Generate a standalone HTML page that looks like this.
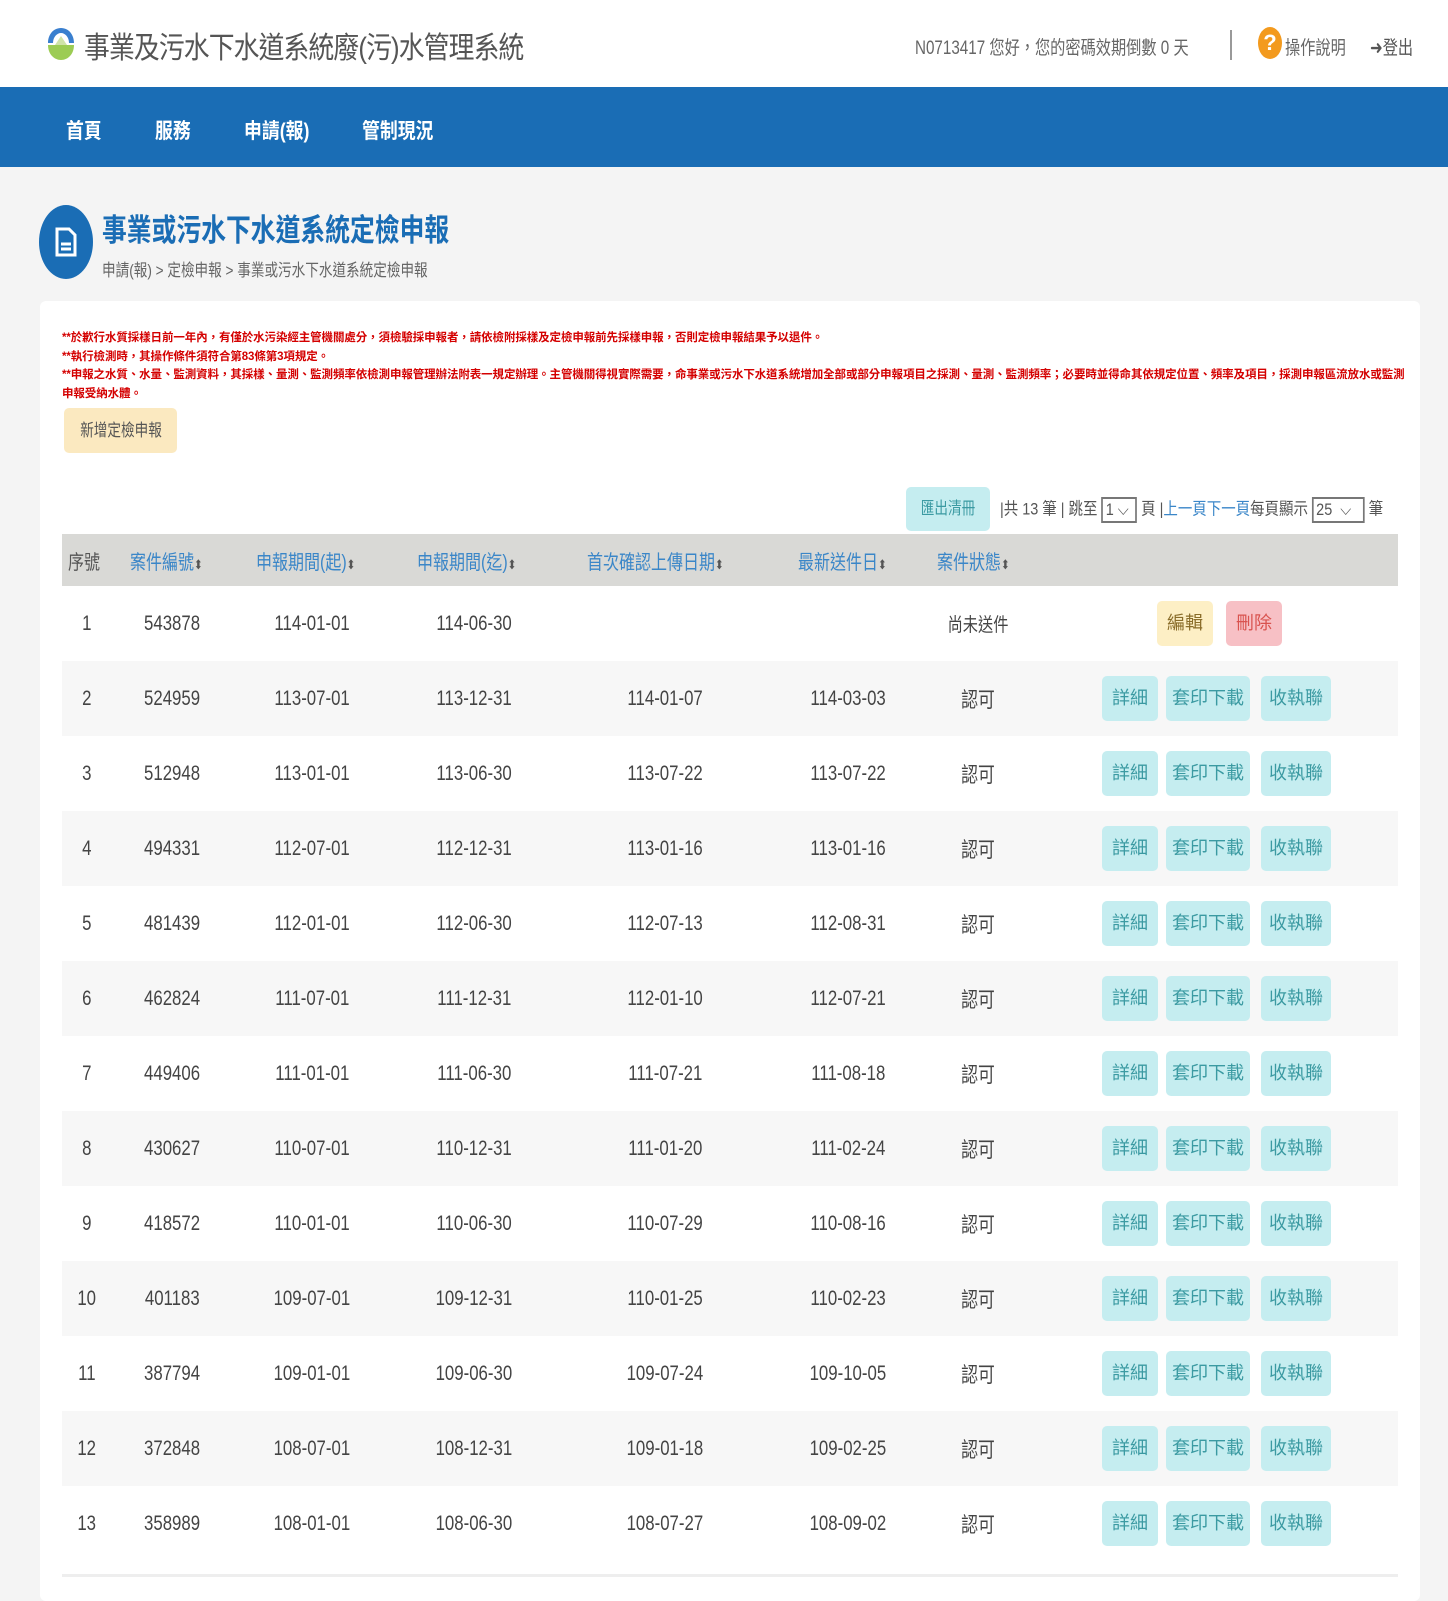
<!DOCTYPE html>
<html><head><meta charset="utf-8">
<style>
*{margin:0;padding:0;box-sizing:border-box}
body{width:1448px;height:1586px;background:#f4f4f4;font-family:"Liberation Sans","Noto Sans CJK TC",sans-serif;color:#444;position:relative;overflow:hidden}
.a{position:absolute;white-space:nowrap}
.c{display:inline-block;transform:scaleX(.8);transform-origin:center}
#hdr{position:absolute;left:0;top:0;width:1448px;height:87px;background:#fff}
#nav{position:absolute;left:0;top:87px;width:1448px;height:80px;background:#1a6db5}
#nav span{position:absolute;top:28px;color:#fff;font-size:21px;font-weight:bold;display:inline-block;transform:scaleX(.85);transform-origin:left}
#card{position:absolute;left:40px;top:301px;width:1380px;height:1300px;background:#fff;border-radius:6px}
.red{color:#d40000;font-size:11.5px;left:62px;font-weight:bold;letter-spacing:-0.1px}
table{position:absolute;left:62px;top:534px;width:1336px;border-collapse:collapse;table-layout:fixed}
th{height:52px;background:#d9d9d6;color:#3a86c8;font-weight:normal;font-size:20px;text-align:left;white-space:nowrap}
td{height:75px;text-align:center;font-size:21px;color:#444;white-space:nowrap}
tr:nth-child(odd) td{background:#f7f7f7}
tr:nth-child(even) td{background:#fff}
td.act{text-align:left;padding-left:68px}
.b{display:inline-block;height:45px;line-height:45px;border-radius:5px;background:#c5edf0;color:#3b9aa2;font-size:18px;text-align:center;vertical-align:middle;margin-right:8px}
.b1{width:56px}.b2{width:84px;margin-right:11px}.b3{width:70px}
.ar{font-size:13px;color:#555}
</style></head><body>
<div id="hdr">
<svg class="a" style="left:47px;top:26px" width="28" height="36" viewBox="0 0 28 36"><path d="M14 2C6 2 1 9 1 17h5c0-6 4-10 8-10s8 4 8 10h5C27 9 22 2 14 2z" fill="#3a7fcf"/><path d="M1 19h26c0 9-6 15-13 15S1 28 1 19z" fill="#9ccc54"/><path d="M8 19l6-9 6 9z" fill="#cfe3a8"/></svg>
<div class="a" style="left:84px;top:23px;font-size:30px;color:#555;letter-spacing:-1px"><span style="display:inline-block;transform:scaleX(.86);transform-origin:left">事業及污水下水道系統廢(污)水管理系統</span></div>
<div class="a" style="left:915px;top:33px;font-size:19px;color:#666"><span class="c" style="transform-origin:left">N0713417 您好，您的密碼效期倒數 0 天</span></div>
<div class="a" style="left:1230px;top:30px;width:2px;height:30px;background:#999"></div>
<div class="a" style="left:1258px;top:27px;width:24px;height:32px;border-radius:50%;background:#f39a1e;color:#fff;font-weight:bold;font-size:22px;text-align:center;line-height:32px">?</div>
<div class="a" style="left:1285px;top:33px;font-size:19px;color:#666"><span class="c" style="transform-origin:left">操作說明</span></div>
<div class="a" style="left:1370px;top:33px;font-size:19px;color:#555"><span class="c" style="transform-origin:left">➜登出</span></div>
</div>
<div id="nav"><span style="left:66px">首頁</span><span style="left:155px">服務</span><span style="left:244px">申請(報)</span><span style="left:362px">管制現況</span></div>
<div class="a" style="left:39px;top:205px;width:54px;height:74px;border-radius:50%;background:#1a6db5"></div>
<svg class="a" style="left:54px;top:226px" width="24" height="32" viewBox="0 0 24 32"><path d="M3 3h12l6 6v20H3z" fill="none" stroke="#fff" stroke-width="3"/><path d="M7 18h10M7 23h10" stroke="#fff" stroke-width="3"/></svg>
<div class="a" style="left:102px;top:205px;font-size:31px;color:#1a6db5;font-weight:bold"><span style="display:inline-block;transform:scaleX(.8);transform-origin:left">事業或污水下水道系統定檢申報</span></div>
<div class="a" style="left:102px;top:256px;font-size:17px;color:#666"><span class="c" style="transform-origin:left">申請(報) &gt; 定檢申報 &gt; 事業或污水下水道系統定檢申報</span></div>
<div id="card"></div>
<div class="a red" style="top:329px">**於歉行水質採樣日前一年內，有僅於水污染經主管機關處分，須檢驗採申報者，請依檢附採樣及定檢申報前先採樣申報，否則定檢申報結果予以退件。</div>
<div class="a red" style="top:348px">**執行檢測時，其操作條件須符合第83條第3項規定。</div>
<div class="a red" style="top:366px">**申報之水質、水量、監測資料，其採樣、量測、監測頻率依檢測申報管理辦法附表一規定辦理。主管機關得視實際需要，命事業或污水下水道系統增加全部或部分申報項目之採測、量測、監測頻率；必要時並得命其依規定位置、頻率及項目，採測申報區流放水或監測</div>
<div class="a red" style="top:385px">申報受納水體。</div>
<div class="a" style="left:64px;top:408px;width:113px;height:45px;border-radius:5px;background:#fbe9c0;color:#555;font-size:17px;line-height:45px;text-align:center"><span class="c">新增定檢申報</span></div>
<div class="a" style="left:906px;top:487px;width:84px;height:44px;border-radius:5px;background:#c5edf0;color:#3b9aa2;font-size:17px;line-height:44px;text-align:center"><span class="c">匯出清冊</span></div>
<div class="a" style="left:1000px;top:497px;font-size:17px;color:#555;line-height:22px"><span style="display:inline-block;transform:scaleX(.85);transform-origin:left">|共 13 筆 | 跳至 <span style="display:inline-block;border:2px solid #777;width:42px;height:26px;vertical-align:middle;font-size:17px;line-height:22px;padding-left:3px">1 ⌵</span> 頁 |<span style="color:#3a86c8">上一頁下一頁</span>每頁顯示 <span style="display:inline-block;border:2px solid #777;width:62px;height:26px;vertical-align:middle;font-size:17px;line-height:22px;padding-left:3px">25 &nbsp;⌵</span> 筆</span></div>
<table>
<colgroup><col style="width:50px"><col style="width:120px"><col style="width:160px"><col style="width:164px"><col style="width:218px"><col style="width:148px"><col style="width:112px"><col></colgroup>
<tr><th style="padding-left:6px;color:#555"><span class="c" style="transform-origin:left">序號</span></th><th style="padding-left:18px"><span class="c" style="transform-origin:left">案件編號<span class="ar">⬍</span></span></th><th style="padding-left:24px"><span class="c" style="transform-origin:left">申報期間(起)<span class="ar">⬍</span></span></th><th style="padding-left:25px"><span class="c" style="transform-origin:left">申報期間(迄)<span class="ar">⬍</span></span></th><th style="padding-left:31px"><span class="c" style="transform-origin:left">首次確認上傳日期<span class="ar">⬍</span></span></th><th style="padding-left:24px"><span class="c" style="transform-origin:left">最新送件日<span class="ar">⬍</span></span></th><th style="padding-left:15px"><span class="c" style="transform-origin:left">案件狀態<span class="ar">⬍</span></span></th><th></th></tr>
<tr><td><span class="c">1</span></td><td><span class="c">543878</span></td><td><span class="c">114-01-01</span></td><td><span class="c">114-06-30</span></td><td></td><td></td><td style="font-size:19px"><span class="c">尚未送件</span></td><td class="act" style="padding-left:123px"><span class="b b1" style="background:#fdefc5;color:#8a6d2a;margin-right:13px">編輯</span><span class="b b1" style="background:#f7c0c5;color:#d9534f">刪除</span></td></tr>
<tr><td><span class="c">2</span></td><td><span class="c">524959</span></td><td><span class="c">113-07-01</span></td><td><span class="c">113-12-31</span></td><td><span class="c">114-01-07</span></td><td><span class="c">114-03-03</span></td><td><span class="c">認可</span></td><td class="act"><span class="b b1">詳細</span><span class="b b2">套印下載</span><span class="b b3">收執聯</span></td></tr>
<tr><td><span class="c">3</span></td><td><span class="c">512948</span></td><td><span class="c">113-01-01</span></td><td><span class="c">113-06-30</span></td><td><span class="c">113-07-22</span></td><td><span class="c">113-07-22</span></td><td><span class="c">認可</span></td><td class="act"><span class="b b1">詳細</span><span class="b b2">套印下載</span><span class="b b3">收執聯</span></td></tr>
<tr><td><span class="c">4</span></td><td><span class="c">494331</span></td><td><span class="c">112-07-01</span></td><td><span class="c">112-12-31</span></td><td><span class="c">113-01-16</span></td><td><span class="c">113-01-16</span></td><td><span class="c">認可</span></td><td class="act"><span class="b b1">詳細</span><span class="b b2">套印下載</span><span class="b b3">收執聯</span></td></tr>
<tr><td><span class="c">5</span></td><td><span class="c">481439</span></td><td><span class="c">112-01-01</span></td><td><span class="c">112-06-30</span></td><td><span class="c">112-07-13</span></td><td><span class="c">112-08-31</span></td><td><span class="c">認可</span></td><td class="act"><span class="b b1">詳細</span><span class="b b2">套印下載</span><span class="b b3">收執聯</span></td></tr>
<tr><td><span class="c">6</span></td><td><span class="c">462824</span></td><td><span class="c">111-07-01</span></td><td><span class="c">111-12-31</span></td><td><span class="c">112-01-10</span></td><td><span class="c">112-07-21</span></td><td><span class="c">認可</span></td><td class="act"><span class="b b1">詳細</span><span class="b b2">套印下載</span><span class="b b3">收執聯</span></td></tr>
<tr><td><span class="c">7</span></td><td><span class="c">449406</span></td><td><span class="c">111-01-01</span></td><td><span class="c">111-06-30</span></td><td><span class="c">111-07-21</span></td><td><span class="c">111-08-18</span></td><td><span class="c">認可</span></td><td class="act"><span class="b b1">詳細</span><span class="b b2">套印下載</span><span class="b b3">收執聯</span></td></tr>
<tr><td><span class="c">8</span></td><td><span class="c">430627</span></td><td><span class="c">110-07-01</span></td><td><span class="c">110-12-31</span></td><td><span class="c">111-01-20</span></td><td><span class="c">111-02-24</span></td><td><span class="c">認可</span></td><td class="act"><span class="b b1">詳細</span><span class="b b2">套印下載</span><span class="b b3">收執聯</span></td></tr>
<tr><td><span class="c">9</span></td><td><span class="c">418572</span></td><td><span class="c">110-01-01</span></td><td><span class="c">110-06-30</span></td><td><span class="c">110-07-29</span></td><td><span class="c">110-08-16</span></td><td><span class="c">認可</span></td><td class="act"><span class="b b1">詳細</span><span class="b b2">套印下載</span><span class="b b3">收執聯</span></td></tr>
<tr><td><span class="c">10</span></td><td><span class="c">401183</span></td><td><span class="c">109-07-01</span></td><td><span class="c">109-12-31</span></td><td><span class="c">110-01-25</span></td><td><span class="c">110-02-23</span></td><td><span class="c">認可</span></td><td class="act"><span class="b b1">詳細</span><span class="b b2">套印下載</span><span class="b b3">收執聯</span></td></tr>
<tr><td><span class="c">11</span></td><td><span class="c">387794</span></td><td><span class="c">109-01-01</span></td><td><span class="c">109-06-30</span></td><td><span class="c">109-07-24</span></td><td><span class="c">109-10-05</span></td><td><span class="c">認可</span></td><td class="act"><span class="b b1">詳細</span><span class="b b2">套印下載</span><span class="b b3">收執聯</span></td></tr>
<tr><td><span class="c">12</span></td><td><span class="c">372848</span></td><td><span class="c">108-07-01</span></td><td><span class="c">108-12-31</span></td><td><span class="c">109-01-18</span></td><td><span class="c">109-02-25</span></td><td><span class="c">認可</span></td><td class="act"><span class="b b1">詳細</span><span class="b b2">套印下載</span><span class="b b3">收執聯</span></td></tr>
<tr><td><span class="c">13</span></td><td><span class="c">358989</span></td><td><span class="c">108-01-01</span></td><td><span class="c">108-06-30</span></td><td><span class="c">108-07-27</span></td><td><span class="c">108-09-02</span></td><td><span class="c">認可</span></td><td class="act"><span class="b b1">詳細</span><span class="b b2">套印下載</span><span class="b b3">收執聯</span></td></tr>
</table>
<div class="a" style="left:62px;top:1574px;width:1336px;height:3px;background:#eee"></div>
</body></html>
